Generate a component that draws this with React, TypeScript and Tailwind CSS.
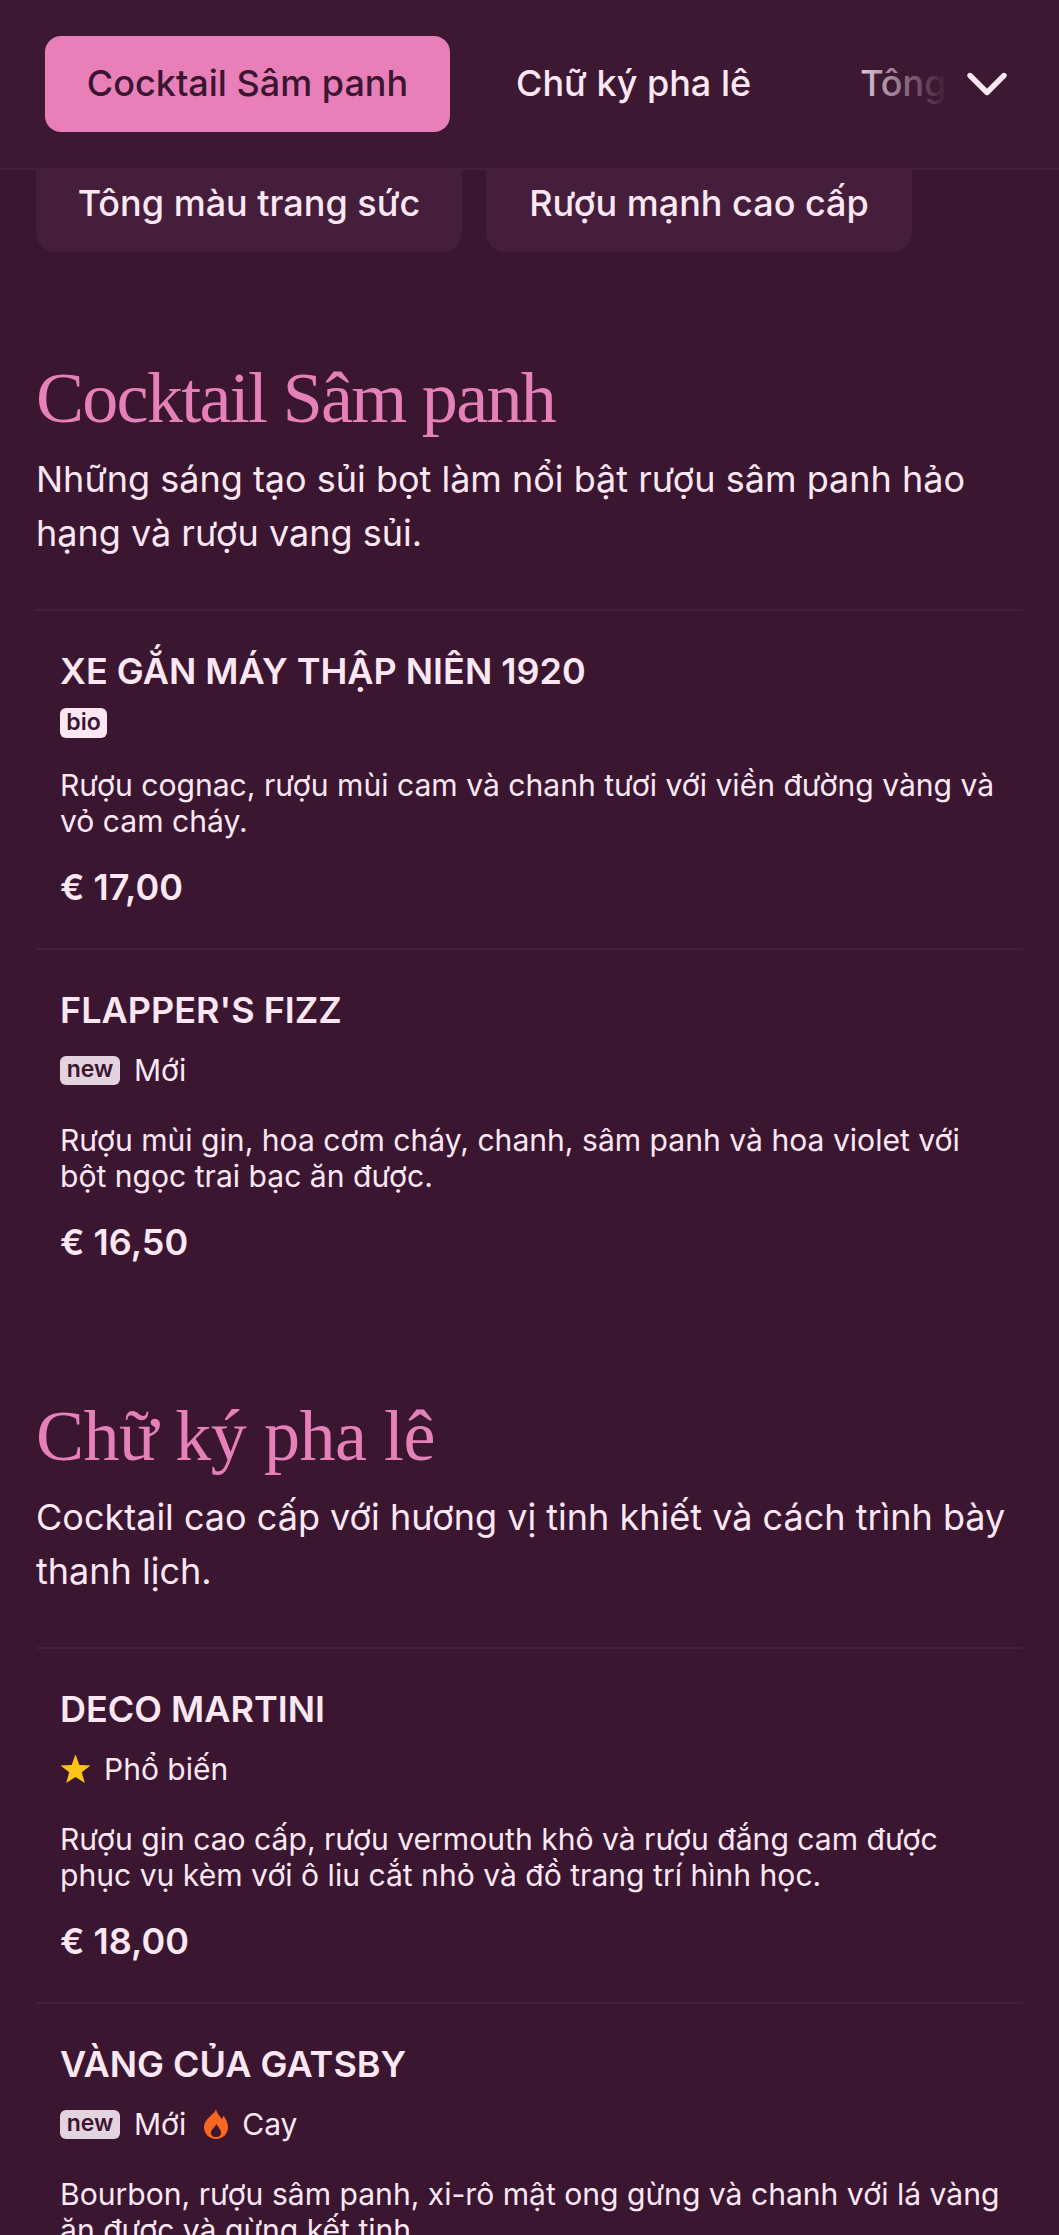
import { ChevronDown } from 'lucide-react';

type Tag = 'bio' | 'new' | 'star' | 'fire';

type Item = {
  name: string;
  tags: Tag[];
  desc: string;
  price: string;
};

const sections: { title: string; tracking: string; intro: string; items: Item[] }[] = [
  {
    title: 'Cocktail Sâm panh',
    tracking: 'tracking-[-1.7px]',
    intro: 'Những sáng tạo sủi bọt làm nổi bật rượu sâm panh hảo hạng và rượu vang sủi.',
    items: [
      {
        name: 'XE GẮN MÁY THẬP NIÊN 1920',
        tags: ['bio'],
        desc: 'Rượu cognac, rượu mùi cam và chanh tươi với viền đường vàng và vỏ cam cháy.',
        price: '€ 17,00',
      },
      {
        name: "FLAPPER'S FIZZ",
        tags: ['new'],
        desc: 'Rượu mùi gin, hoa cơm cháy, chanh, sâm panh và hoa violet với bột ngọc trai bạc ăn được.',
        price: '€ 16,50',
      },
    ],
  },
  {
    title: 'Chữ ký pha lê',
    tracking: 'tracking-[-0.45px]',
    intro: 'Cocktail cao cấp với hương vị tinh khiết và cách trình bày thanh lịch.',
    items: [
      {
        name: 'DECO MARTINI',
        tags: ['star'],
        desc: 'Rượu gin cao cấp, rượu vermouth khô và rượu đắng cam được phục vụ kèm với ô liu cắt nhỏ và đồ trang trí hình học.',
        price: '€ 18,00',
      },
      {
        name: 'VÀNG CỦA GATSBY',
        tags: ['new', 'fire'],
        desc: 'Bourbon, rượu sâm panh, xi-rô mật ong gừng và chanh với lá vàng ăn được và gừng kết tinh.',
        price: '€ 19,00',
      },
    ],
  },
];

function ItemTag({ tag }: { tag: Tag }) {
  if (tag === 'bio') {
    return (
      <span className="h-[30px] w-[47px] text-center rounded-[6px] bg-[#fce7f3] text-[#3a1631] text-[23px] leading-[29px] font-semibold">
        bio
      </span>
    );
  }
  if (tag === 'new') {
    return (
      <span className="flex items-center gap-[14px]">
        <span className="h-[29px] w-[60px] text-center rounded-[6px] bg-[#e3d3de] text-[#3a1631] text-[23px] leading-[26px] font-semibold">
          new
        </span>
        <span>Mới</span>
      </span>
    );
  }
  if (tag === 'star') {
    return (
      <span className="flex items-center gap-[13px]">
        <svg viewBox="0 0 32 30" className="w-[31px] h-[30px]">
          <polygon
            points="16,0 20,10.8 31.5,11.3 22.5,18.4 25.6,29.5 16,23.2 6.4,29.5 9.5,18.4 0.5,11.3 12,10.8"
            fill="#fcc419"
          />
        </svg>
        <span>Phổ biến</span>
      </span>
    );
  }
  return (
    <span className="flex items-center gap-[14px]">
      <svg viewBox="0 0 24 30" className="w-[24px] h-[30px]">
        <path
          fillRule="evenodd"
          fill="#f9661f"
          d="M12 0C13 5 16 7 18 10C19 8.5 19 7.5 19.5 6.5C22 10 24 14 24 18.500C24 25 18.500 30 12 30C5.500 30 0 25 0 18.500C0 12.500 4 9.500 7 6.500C9 4.500 11.500 3 12 0ZM12.500 15C11.500 18 7 20 7 24C7 26.500 9 28 12 28C15 28 17 26.500 17 24C17 20 13.500 18 12.500 15Z"
        />
      </svg>
      <span>Cay</span>
    </span>
  );
}

function MenuItem({ item }: { item: Item }) {
  // a row with only a badge is shorter than one with a text label
  const labelled = item.tags[0] !== 'bio';
  return (
    <div className="border-t-2 border-[#451e3b] pl-[24px] pr-[20px] pt-[41px] pb-[41px]">
      <h3 className="text-[36px] leading-[38px] font-semibold">{item.name}</h3>
      <div className={`mt-[18px] flex items-center gap-[18px] text-[30px] ${labelled ? 'h-[46px]' : 'h-[30px]'}`}>
        {item.tags.map(tag => (
          <ItemTag key={tag} tag={tag} />
        ))}
      </div>
      <p className="mt-[29px] text-[30.1px] leading-[36px]">{item.desc}</p>
      <p className="mt-[28px] text-[36px] leading-[40px] font-semibold">{item.price}</p>
    </div>
  );
}

export default function App() {
  return (
    <div className="h-[2235px] overflow-hidden bg-[#3a1631] text-[#fce7f3] font-['Inter',sans-serif]">
      <header className="relative h-[170px] bg-[#3d1833] border-b-2 border-[#451e3b] overflow-hidden">
        <nav className="flex items-center h-[168px] pl-[45px] whitespace-nowrap text-[36px] font-medium">
          <button className="shrink-0 h-[96px] w-[405px] pb-[2px] rounded-[16px] bg-[#e87fb8] text-[#3a1631]">
            Cocktail Sâm panh
          </button>
          <button className="shrink-0 h-[96px] pb-[2px] pl-[66px] pr-[43px]">Chữ ký pha lê</button>
          <button className="shrink-0 h-[96px] pb-[2px] pl-[66px]">Tông màu trang sức</button>
        </nav>
        <div className="absolute right-0 top-0 h-full w-[215px] flex items-center justify-end pr-[38px] bg-gradient-to-r from-transparent to-[#3d1833] to-[48%]">
          <ChevronDown className="w-[68px] h-[68px]" strokeWidth={1.9} />
        </div>
      </header>

      <div className="flex gap-[24px] px-[36px]">
        <div className="h-[82px] w-[426px] pb-[17px] flex items-center justify-center rounded-b-[20px] bg-[#451e3b] text-[36px] font-medium">
          Tông màu trang sức
        </div>
        <div className="h-[82px] w-[426px] pb-[17px] flex items-center justify-center rounded-b-[20px] bg-[#451e3b] text-[36px] font-medium">
          Rượu mạnh cao cấp
        </div>
      </div>

      <main className="px-[36px]">
        {sections.map(section => (
          <section key={section.title} className="mt-[91px] first:mt-[104px]">
            <h2 className={`font-['Liberation_Serif',serif] text-[72px] leading-[84px] text-[#e580b8] ${section.tracking}`}>
              {section.title}
            </h2>
            <p className="mt-[12px] text-[36px] leading-[54px]">{section.intro}</p>
            <div className="mt-[49px]">
              {section.items.map(item => (
                <MenuItem key={item.name} item={item} />
              ))}
            </div>
          </section>
        ))}
      </main>
    </div>
  );
}
